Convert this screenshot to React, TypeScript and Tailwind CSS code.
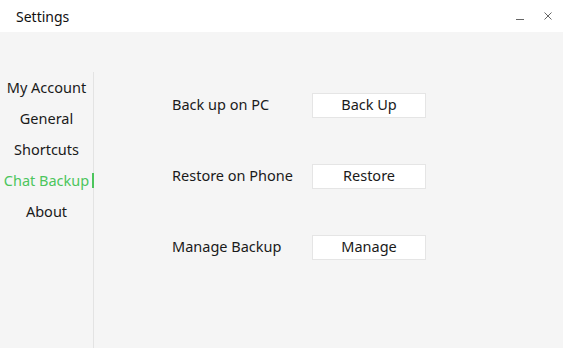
import React from 'react';

const menu = ['My Account', 'General', 'Shortcuts', 'Chat Backup', 'About'];
const rows = [
  { label: 'Back up on PC', action: 'Back Up' },
  { label: 'Restore on Phone', action: 'Restore' },
  { label: 'Manage Backup', action: 'Manage' },
];

export default function App() {
  const active = 'Chat Backup';
  return (
    <div
      className="w-[563px] h-[348px] flex flex-col bg-[#f5f5f5] text-[#1a1a1a] overflow-hidden"
      style={{ fontFamily: '"Noto Sans", "Open Sans", sans-serif' }}
    >
      {/* title bar */}
      <div className="h-[32px] bg-white flex items-center pl-[16px] pr-[10px]">
        <span className="text-[14px] text-[#111]">Settings</span>
        <div className="ml-auto flex items-center gap-[18px] text-[#555]">
          <svg width="10" height="10" viewBox="0 0 10 10">
            <path d="M1 8.5h8" stroke="#666" strokeWidth="1" />
          </svg>
          <svg width="10" height="10" viewBox="0 0 10 10">
            <path d="M1.5 1.5l7 7M8.5 1.5l-7 7" stroke="#666" strokeWidth="1" />
          </svg>
        </div>
      </div>

      <div className="flex flex-1">
        {/* sidebar */}
        <div className="w-[94px] mt-[40px] border-r border-[#e3e3e3] flex flex-col">
          {menu.map((m) => (
            <div
              key={m}
              className={`relative h-[31px] flex items-center justify-center text-[14.5px] ${
                m === active ? 'text-[#4cc55c]' : 'text-[#1a1a1a]'
              }`}
            >
              {m}
              {m === active && (
                <span className="absolute right-[-1px] top-[8px] w-[2px] h-[15px] bg-[#4cc55c]" />
              )}
            </div>
          ))}
        </div>

        {/* content */}
        <div className="flex flex-col pl-[78px] pt-[61px] gap-[47px]">
          {rows.map((r) => (
            <div key={r.label} className="flex items-center h-[24px]">
              <span className="w-[140px] text-[14.5px]">{r.label}</span>
              <button className="w-[114px] h-[25px] bg-white border border-[#e5e5e5] text-[14.5px] text-[#1a1a1a]">
                {r.action}
              </button>
            </div>
          ))}
        </div>
      </div>
    </div>
  );
}
